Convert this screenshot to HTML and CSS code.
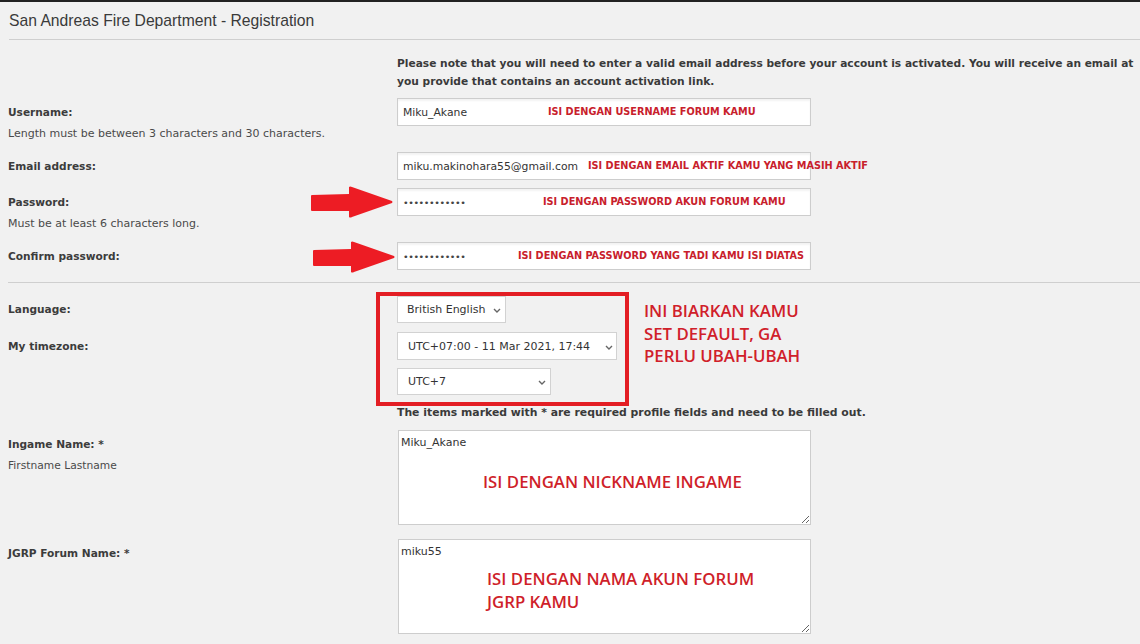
FILE: index.html
```html
<!DOCTYPE html>
<html lang="en">
<head>
<meta charset="utf-8">
<title>San Andreas Fire Department - Registration</title>
<link rel="stylesheet" href="styles.css">
</head>
<body>
<div class="topbar"></div>
<header class="title">San Andreas Fire Department - Registration</header>
<main class="form">
  <div class="row note-row">
    <div></div>
    <p class="note note-top">Please note that you will need to enter a valid email address before your account is activated. You will receive an email at<br>you provide that contains an account activation link.</p>
  </div>

  <div class="row">
    <div class="lab"><label>Username:</label><div class="help">Length must be between 3 characters and 30 characters.</div></div>
    <div class="field">
      <input class="txt" type="text" value="Miku_Akane" readonly>
      <span class="anno anno-user">ISI DENGAN USERNAME FORUM KAMU</span>
    </div>
  </div>

  <div class="row">
    <div class="lab"><label>Email address:</label></div>
    <div class="field">
      <input class="txt" type="text" value="miku.makinohara55@gmail.com" readonly>
      <span class="anno anno-email">ISI DENGAN EMAIL AKTIF KAMU YANG MASIH AKTIF</span>
    </div>
  </div>

  <div class="row">
    <div class="lab"><label>Password:</label><div class="help">Must be at least 6 characters long.</div></div>
    <div class="field">
      <svg class="arrow arrow-1" width="82" height="32" viewBox="0 0 82 32"><path d="M1,9 L38,8 L38,1 Q39,0 41,1 L81,15 Q82,16 81,17 L41,31 Q39,32 38,31 L38,25 L1,25 Q0,25 0,24 L0,10 Q0,9 1,9 Z" fill="#ed1c24"/></svg>
      <input class="txt pw" type="text" value="••••••••••••" readonly>
      <span class="anno anno-pw">ISI DENGAN PASSWORD AKUN FORUM KAMU</span>
    </div>
  </div>

  <div class="row row-last">
    <div class="lab"><label>Confirm password:</label></div>
    <div class="field">
      <svg class="arrow arrow-2" width="82" height="32" viewBox="0 0 82 32"><path d="M1,9 L38,8 L38,1 Q39,0 41,1 L81,15 Q82,16 81,17 L41,31 Q39,32 38,31 L38,25 L1,25 Q0,25 0,24 L0,10 Q0,9 1,9 Z" fill="#ed1c24"/></svg>
      <input class="txt pw" type="text" value="••••••••••••" readonly>
      <span class="anno anno-cpw">ISI DENGAN PASSWORD YANG TADI KAMU ISI DIATAS</span>
    </div>
  </div>

  <hr class="divider">

  <div class="lang-group">
    <div class="redbox"></div>
    <div class="redtext">INI BIARKAN KAMU<br>SET DEFAULT, GA<br>PERLU UBAH-UBAH</div>
    <div class="row row-lang">
      <div class="lab"><label class="lab27">Language:</label></div>
      <div class="field">
        <select class="sel sel-lang"><option>British English</option></select>
      </div>
    </div>
    <div class="row row-tz">
      <div class="lab"><label>My timezone:</label></div>
      <div class="field stack">
        <select class="sel sel-tz"><option>UTC+07:00 - 11 Mar 2021, 17:44</option></select>
        <select class="sel sel-tz2"><option>UTC+7</option></select>
      </div>
    </div>
  </div>

  <div class="row note-row2">
    <div></div>
    <p class="note note-req">The items marked with * are required profile fields and need to be filled out.</p>
  </div>

  <div class="row row-ta1">
    <div class="lab"><label>Ingame Name: *</label><div class="help help-sm">Firstname Lastname</div></div>
    <div class="field">
      <textarea class="ta" readonly>Miku_Akane</textarea>
      <span class="big-anno anno-ig">ISI DENGAN NICKNAME INGAME</span>
    </div>
  </div>

  <div class="row">
    <div class="lab"><label>JGRP Forum Name: *</label></div>
    <div class="field">
      <textarea class="ta" readonly>miku55</textarea>
      <span class="big-anno anno-jg">ISI DENGAN NAMA AKUN FORUM<br>JGRP KAMU</span>
    </div>
  </div>
</main>
</body>
</html>
```

FILE: styles.css
```css
html, body {
  margin: 0;
  padding: 0;
}
body {
  background: #f1f1f1;
  font-family: "DejaVu Sans", Verdana, sans-serif;
  color: #333;
  overflow: hidden;
  width: 1140px;
  height: 644px;
}
.topbar {
  height: 2px;
  background: #222;
}
.title {
  margin-left: 9px;
  height: 37px;
  line-height: 38px;
  border-bottom: 1px solid #cfcfcf;
  font-family: "Liberation Sans", Arial, sans-serif;
  font-size: 15.7px;
  color: #3a3a3a;
}
.form {
  padding-left: 8px;
  padding-top: 15px;
}
.row {
  display: grid;
  grid-template-columns: 389px 1fr;
  margin-bottom: 8px;
}
.note-row {
  margin-bottom: 7px;
}
.note {
  margin: 0;
  font-weight: bold;
  font-size: 10.65px;
  line-height: 18px;
  color: #3a3a3a;
  white-space: nowrap;
}
.note-req {
  font-size: 10.85px;
}
.lab label {
  display: block;
  font-weight: bold;
  font-size: 10.6px;
  line-height: 28px;
  color: #3c3c3c;
}
.lab .lab27 {
  line-height: 27px;
}
.help {
  font-size: 11px;
  line-height: 16px;
  margin-bottom: 2px;
  color: #4a4a4a;
}
.help-sm {
  font-size: 10.7px;
}
.field {
  position: relative;
}
.txt {
  display: block;
  box-sizing: border-box;
  width: 414px;
  height: 28px;
  margin: 0;
  padding: 0 5px;
  border: 1px solid #cdcdcd;
  background: #fff;
  box-shadow: inset 0 2px 2px rgba(0, 0, 0, 0.05);
  font-family: "DejaVu Sans", Verdana, sans-serif;
  font-size: 10.8px;
  color: #333;
  outline: none;
}
.txt.pw {
  font-size: 9.5px;
  letter-spacing: -0.4px;
  color: #444;
}
.anno {
  position: absolute;
  top: 0;
  height: 28px;
  line-height: 28px;
  font-family: "DejaVu Sans Condensed", "DejaVu Sans", sans-serif;
  font-stretch: condensed;
  font-weight: bold;
  font-size: 10.8px;
  color: #c8202b;
  white-space: nowrap;
}
.anno-user { left: 151px; }
.anno-email { left: 191px; }
.anno-pw { left: 146px; }
.anno-cpw { left: 121px; }
.arrow {
  position: absolute;
  display: block;
}
.arrow-1 { left: -86px; top: -2px; }
.arrow-2 { left: -84px; top: -1px; }
.row-last {
  margin-bottom: 12px;
}
.divider {
  margin: 0 0 13px 0;
  border: 0;
  border-top: 1px solid #cfcfcf;
  height: 0;
}
.lang-group {
  position: relative;
}
.row-lang { margin-bottom: 9px; }
.row-tz { margin-bottom: 9px; }
.stack {
  display: flex;
  flex-direction: column;
  align-items: flex-start;
  gap: 8px;
}
.sel {
  display: block;
  box-sizing: border-box;
  -webkit-appearance: none;
  appearance: none;
  height: 28px;
  margin: 0;
  padding: 0 18px 0 10px;
  border: 1px solid #d2d2d2;
  border-radius: 0;
  background-color: #fff;
  background-image: url("data:image/svg+xml,%3Csvg xmlns='http://www.w3.org/2000/svg' width='8' height='5' viewBox='0 0 8 5'%3E%3Cpath d='M1 1 L4 4 L7 1' fill='none' stroke='%23666' stroke-width='1.4'/%3E%3C/svg%3E");
  background-repeat: no-repeat;
  font-family: "DejaVu Sans", Verdana, sans-serif;
  font-size: 11px;
  color: #333;
}
.sel-lang {
  width: 109px;
  height: 27px;
  padding-left: 9px;
  background-position: 95px 11px;
}
.sel-tz {
  width: 220px;
  background-position: 207px 12px;
}
.sel-tz2 {
  width: 154px;
  height: 27px;
  background-position: 140px 11px;
}
.redbox {
  position: absolute;
  left: 368px;
  top: -4px;
  width: 253px;
  height: 114px;
  box-sizing: border-box;
  border: 4px solid #e31e24;
  pointer-events: none;
}
.redtext {
  position: absolute;
  left: 636px;
  top: 4px;
  font-family: "Open Sans", sans-serif;
  font-weight: 600;
  font-size: 16.8px;
  line-height: 22.5px;
  color: #d0202a;
  white-space: nowrap;
}
.note-row2 { margin-bottom: 8px; }
.row-ta1 { margin-bottom: 14px; }
.ta {
  display: block;
  box-sizing: border-box;
  width: 413px;
  height: 95px;
  margin: 0 0 0 1px;
  padding: 5px 2px;
  border: 1px solid #cdcdcd;
  background: #fff;
  font-family: "DejaVu Sans", Verdana, sans-serif;
  font-size: 11px;
  line-height: 14px;
  color: #333;
  outline: none;
}
.big-anno {
  position: absolute;
  font-family: "Open Sans", sans-serif;
  font-weight: 600;
  font-size: 16.8px;
  line-height: 23px;
  color: #cf1f2a;
  white-space: nowrap;
}
.anno-ig { left: 86px; top: 40px; }
.anno-jg { left: 90px; top: 28px; }
```
